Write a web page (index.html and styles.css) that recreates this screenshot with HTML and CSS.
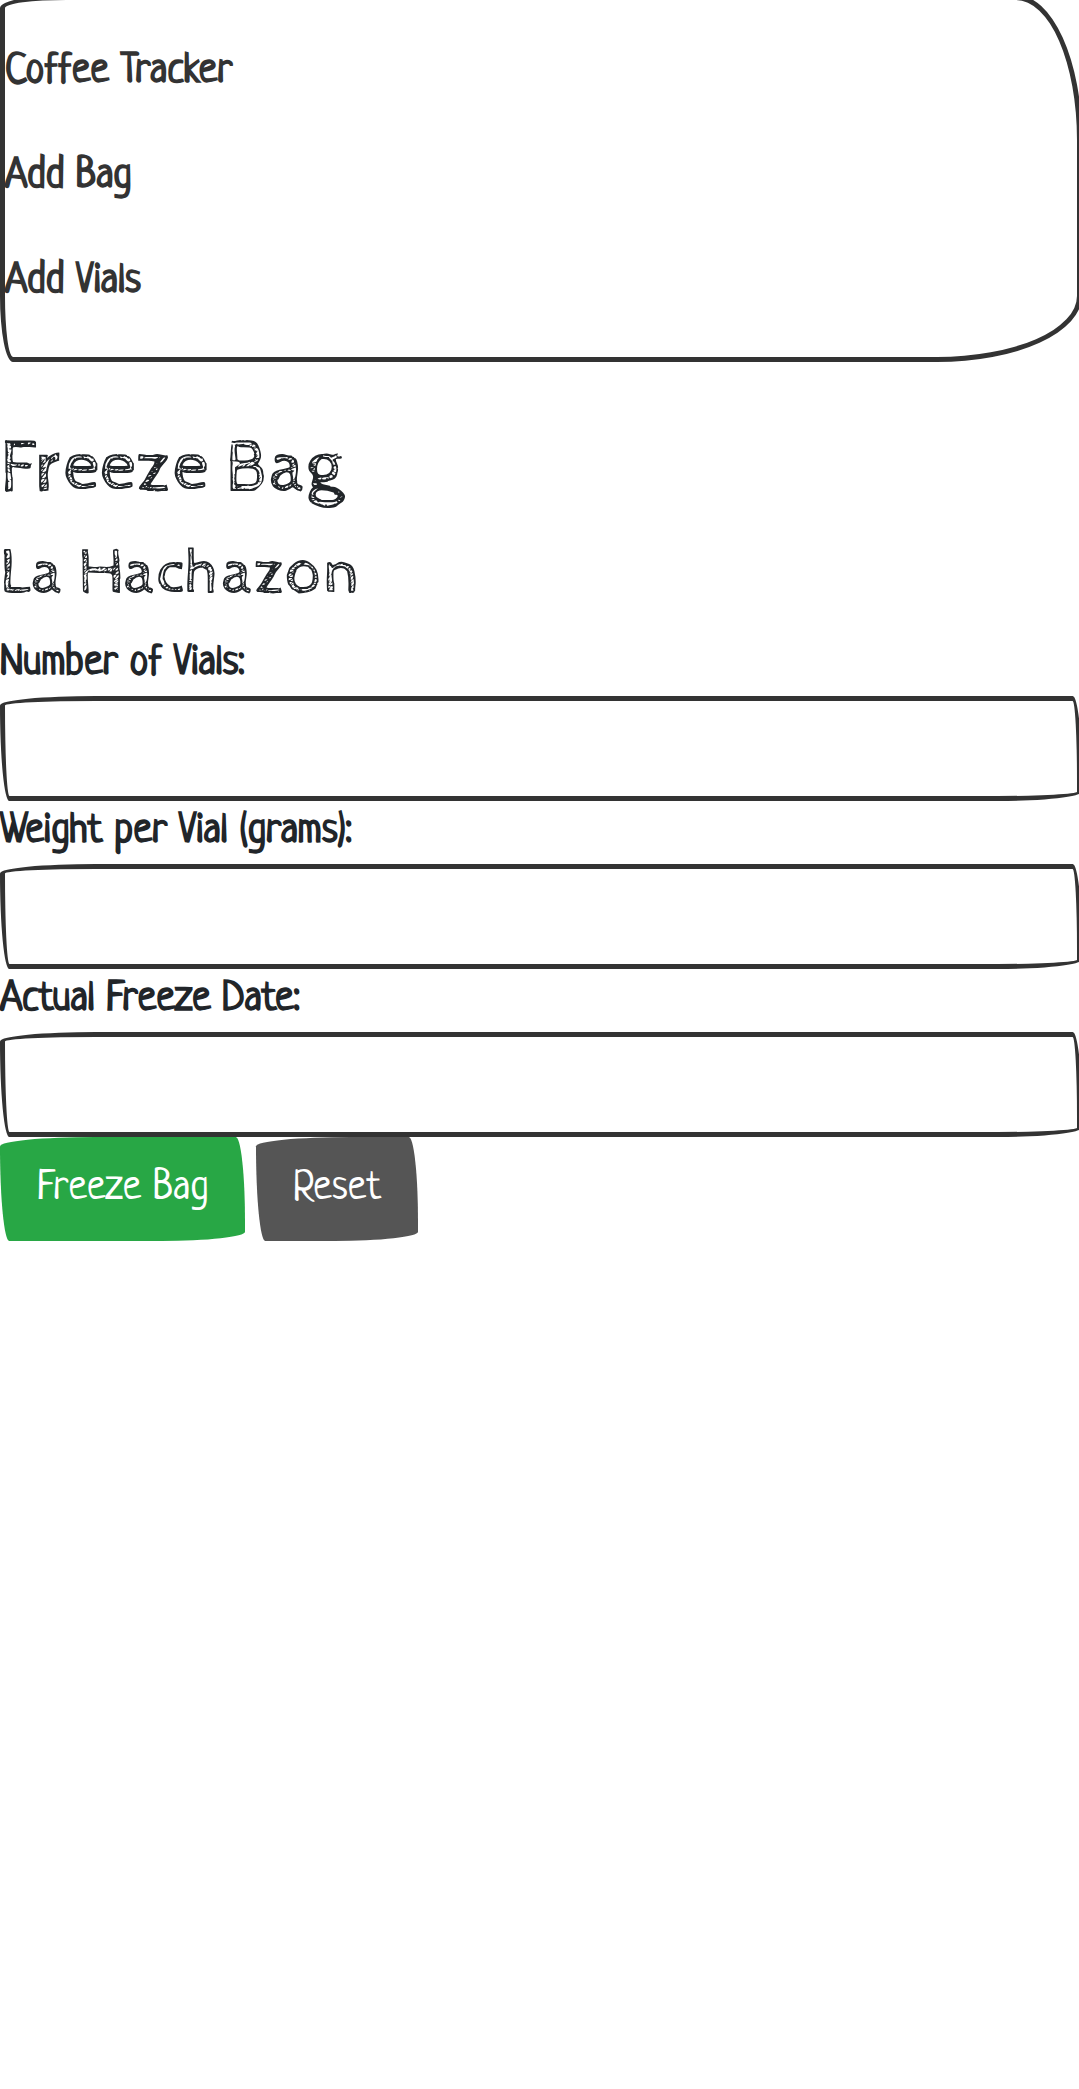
FILE: index.html
```html
<!DOCTYPE html>
<html lang="en">
<head>
<meta charset="utf-8">
<meta name="viewport" content="width=device-width, initial-scale=1">
<title>Freeze Bag</title>
<link rel="stylesheet" href="styles.css">
</head>
<body>
<div class="page">
  <nav class="navbar">
    <a class="nav-link" href="#">Coffee Tracker</a>
    <a class="nav-link" href="#">Add Bag</a>
    <a class="nav-link" href="#">Add Vials</a>
  </nav>
  <main class="content">
    <h1 class="title">Freeze Bag</h1>
    <h2 class="subtitle">La Hachazon</h2>
    <form class="form">
      <label class="label" for="vials">Number of Vials:</label>
      <input class="field" id="vials" type="text" inputmode="numeric">
      <label class="label" for="weight">Weight per Vial (grams):</label>
      <input class="field" id="weight" type="text" inputmode="decimal">
      <label class="label" for="date">Actual Freeze Date:</label>
      <input class="field" id="date" type="text">
      <div class="actions">
        <button class="button button-primary" type="submit">Freeze Bag</button>
        <button class="button button-secondary" type="reset">Reset</button>
      </div>
    </form>
  </main>
</div>
</body>
</html>
```
FILE: styles.css
```css
* { box-sizing: border-box; }

body {
  margin: 0;
  background: #fff;
  color: #212529;
  font-family: Neucha, "Liberation Sans Narrow", "Liberation Sans", sans-serif;
  font-size: 42px;
  line-height: 63px;
}

.page { overflow: hidden; }

.navbar {
  display: flex;
  flex-direction: column;
  align-items: flex-start;
  margin: -5px -3px 0 0;
  padding: 20px 0 22px;
  border: 5px solid #333;
  border-radius: 66px 66px 145px 13px / 13px 145px 66px 66px;
}

.nav-link {
  padding: 21px 0;
  color: #333;
  font-weight: 700;
  text-decoration: none;
}

.content { margin: 63px -3px 0 0; }

.title,
.subtitle {
  margin: 0 0 21px;
  font-family: "Cabin Sketch", Lato, sans-serif;
  font-weight: 400;
}

.title { font-size: 74px; line-height: 88px; }
.subtitle { font-size: 65px; line-height: 78px; }

.form { display: flex; flex-direction: column; }

.label { font-weight: 700; }

.field {
  width: 100%;
  height: 105px;
  padding: 16px 32px;
  border: 5px solid #333;
  background: #fff;
  color: inherit;
  font: inherit;
}

.field,
.button { border-radius: 255px 25px 225px 25px / 25px 225px 25px 255px; }

.actions { display: flex; gap: 11px; }

.button {
  height: 104px;
  padding: 0 37px;
  border: 0;
  color: #fff;
  font: inherit;
}

.button-primary { background: #28a745; }
.button-secondary { background: #555; }
```
